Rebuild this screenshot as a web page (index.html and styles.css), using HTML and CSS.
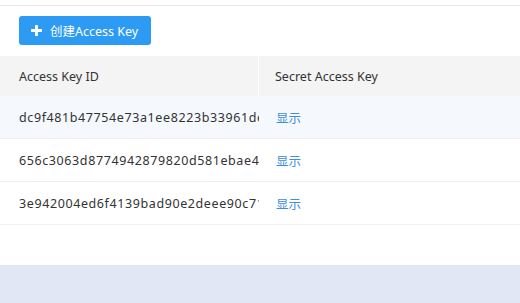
FILE: index.html
```html
<!DOCTYPE html>
<html>
<head>
<meta charset="utf-8">
<link rel="stylesheet" href="styles.css">
</head>
<body>
<div class="page">
  <div class="panel">
    <div class="toolbar">
      <button class="btn-create">
        <svg class="plus" width="11" height="11" viewBox="0 0 11 11"><path d="M5.5 0v11M0 5.5h11" stroke="#fff" stroke-width="2.8"/></svg>
        <span>创建Access Key</span>
      </button>
    </div>
    <div class="table">
      <div class="row head">
        <div class="cell c1">Access Key ID</div>
        <div class="cell c2">Secret Access Key</div>
      </div>
      <div class="row hover">
        <div class="cell c1 mono">dc9f481b47754e73a1ee8223b33961de</div>
        <div class="cell c2"><a class="link">显示</a></div>
      </div>
      <div class="row">
        <div class="cell c1 mono">656c3063d8774942879820d581ebae4</div>
        <div class="cell c2"><a class="link">显示</a></div>
      </div>
      <div class="row">
        <div class="cell c1 mono">3e942004ed6f4139bad90e2deee90c71</div>
        <div class="cell c2"><a class="link">显示</a></div>
      </div>
    </div>
  </div>
  <div class="footer"></div>
</div>
</body>
</html>
```
FILE: styles.css
```css
html, body {
  margin: 0;
  padding: 0;
  background: #fff;
}
body {
  font-family: "Noto Sans", "Noto Sans CJK SC", sans-serif;
  color: #333;
  width: 520px;
  height: 303px;
  overflow: hidden;
}
.page {
  display: flex;
  flex-direction: column;
  height: 303px;
}
.panel {
  border-top: 1px solid #e8e8e8;
  margin-top: 5px;
  height: 260px;
  box-sizing: border-box;
}
.toolbar {
  padding: 10px 0 10px 19px;
  height: 50px;
  box-sizing: border-box;
}
.btn-create {
  display: flex;
  align-items: center;
  gap: 8px;
  height: 29px;
  width: 132px;
  padding: 0 0 0 12px;
  border: none;
  border-radius: 3px;
  background: #2d9bf4;
  color: #fff;
  font-family: "Noto Sans", "Noto Sans CJK SC", sans-serif;
  font-size: 12.5px;
  box-sizing: border-box;
}
.plus { flex: none; }
.table {
  display: flex;
  flex-direction: column;
}
.row {
  display: flex;
  height: 43px;
  align-items: stretch;
  border-bottom: 1px solid #efefef;
  box-sizing: border-box;
}
.row.head {
  height: 40px;
  background: #f4f4f4;
  border-bottom: none;
}
.row.hover { background: #f5f9fe; }
.cell {
  display: flex;
  align-items: center;
  font-size: 12.5px;
  white-space: nowrap;
  overflow: hidden;
}
.c1 {
  width: 259px;
  padding-left: 19px;
  box-sizing: border-box;
  flex: none;
}
.head .c1 { border-right: 1px solid #fff; }
.c2 {
  padding-left: 17px;
  flex: 1;
}
.head .c2 { padding-left: 16px; }
.mono { letter-spacing: 0.6px; }
.link {
  color: #3d8fdb;
  font-size: 12.5px;
  cursor: pointer;
}
.footer {
  flex: 1;
  background: #e1e7f4;
}
```
